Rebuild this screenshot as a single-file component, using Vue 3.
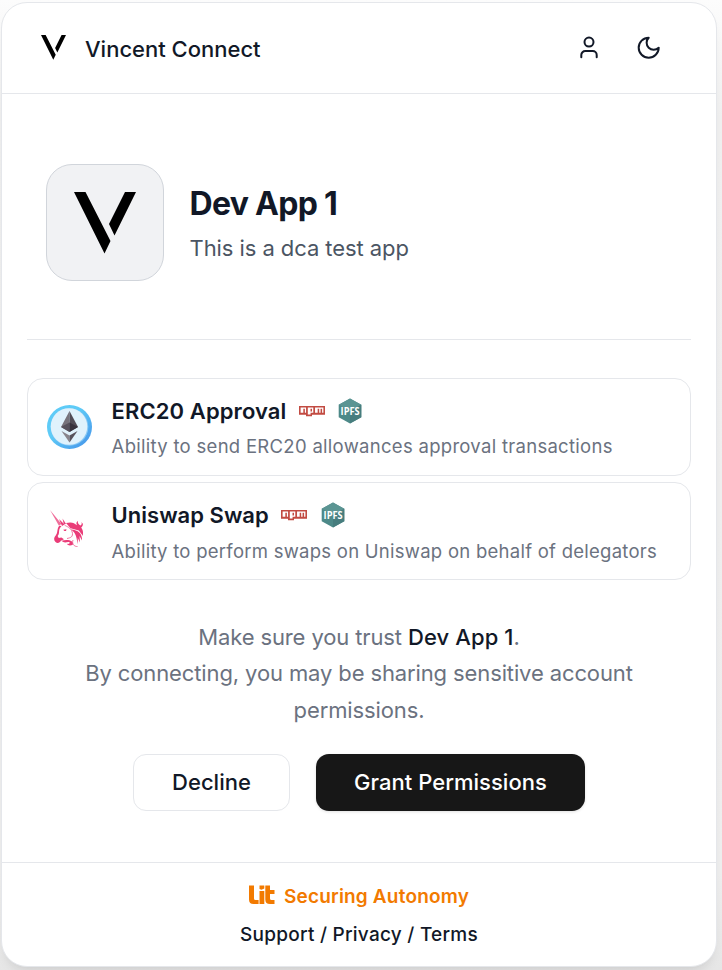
<script setup>
const abilities = [
  { id: 'erc20', name: 'ERC20 Approval', text: 'Ability to send ERC20 allowances approval transactions' },
  { id: 'uniswap', name: 'Uniswap Swap', text: 'Ability to perform swaps on Uniswap on behalf of delegators' },
]
</script>

<template>
  <div class="page">
    <main class="card">
      <header class="header">
        <svg class="brand-mark" viewBox="0 0 62 62"><path d="M0 0H11.5L36.5 49L30.5 61.5Z M51 0H62L40.5 43.5L35 32Z" /></svg>
        <span class="brand">Vincent Connect</span>
        <nav class="tools">
          <svg viewBox="0 0 26 26"><circle cx="13" cy="7.1" r="4.5" /><path d="M5.3 22.3V20A4 4 0 0 1 9.3 16H16.7A4 4 0 0 1 20.7 20V22.3" /></svg>
          <svg viewBox="0 0 26 26"><path d="M12.7 2.7A6.7 6.7 0 0 0 22.7 12.7A10 10 0 1 1 12.7 2.7Z" /></svg>
        </nav>
      </header>

      <section class="body">
        <div class="app">
          <div class="app-logo">
            <svg viewBox="0 0 62 62"><path d="M0 0H11.5L36.5 49L30.5 61.5Z M51 0H62L40.5 43.5L35 32Z" /></svg>
          </div>
          <div class="app-info">
            <h1>Dev App 1</h1>
            <p>This is a dca test app</p>
          </div>
        </div>

        <div class="abilities">
          <article v-for="a in abilities" :key="a.id" class="ability" :class="a.id">
            <svg v-if="a.id === 'erc20'" class="ability-icon" viewBox="0.5 0 46 46">
              <defs>
                <linearGradient id="ring" x1="0" y1="0" x2="1" y2="1"><stop offset=".4" stop-color="#5ecbf7" /><stop offset="1" stop-color="#438fe8" /></linearGradient>
              </defs>
              <ellipse cx="23" cy="23" rx="22.5" ry="22" fill="url(#ring)" />
              <circle cx="23" cy="23" r="18.8" fill="#8bcaf5" />
              <circle cx="22.5" cy="22.5" r="18.3" fill="#e0f2fc" />
              <path d="M23 7L14.5 23L23 28Z" fill="#77737b" />
              <path d="M23 7L31.5 23L23 28Z" fill="#514c56" />
              <path d="M14.5 23L23 18.5V28Z" fill="#57525c" />
              <path d="M31.5 23L23 18.5V28Z" fill="#38333e" />
              <path d="M15 27L23 31.5V38.5Z" fill="#88848b" />
              <path d="M31 27L23 31.5V38.5Z" fill="#57525c" />
            </svg>
            <svg v-else class="ability-icon" viewBox="1 2 46 46">
              <g fill="#ea3c78">
                <path d="M4 4L15.5 18L12.8 19.5Z" fill="#f06d9a" />
                <path d="M13 13L18.5 18.5L16 20Z" />
                <path d="M16.5 12.5L20 18L17.8 18.3Z" />
                <path d="M13.5 19.5C10.5 23 12.2 26.5 9.7 29.5C7.8 31.5 7.5 34 9.5 36C11.5 37.7 14 36.8 14.8 34.7L18 33.2L15.4 31.6L12.8 32L11.6 30C14.4 27 11.5 23.5 15.5 20.2Z" />
                <path d="M20 17C26 15.5 28 17 31 19.2C30 17.2 30.3 16.5 31.8 14.8C31.7 17 32.2 18.5 34.4 19.4C36 18.7 36.2 16.8 35 16.2C38 17 37 20 35.2 21.5C38 26 36.7 27.2 37 30L32.8 24.5L24.5 22.2Z" />
                <path d="M25 23.5C32 24 36.5 27.5 36 34.5L33.5 30L34 36.5L31.8 32L31.8 38.3C30.5 32 30.5 27.5 25 23.5Z" />
                <path d="M15.5 34.8C22 33 28 34.8 27 38.4C24.7 40.3 21.6 39.6 21 37.8C22.6 38.2 24 37.6 23.7 36.5C21.5 35 18.8 38.2 15.5 34.8Z" />
              </g>
              <path d="M18.5 19C21 21 24.5 21 26.2 26C27.5 31 24.4 31.8 21 32.5M27 34C25.7 38 28.2 40.7 31.5 40.5" fill="none" stroke="#ee6796" stroke-width=".9" />
              <path d="M17.2 23.8L20.5 23.3L20 25L18.4 24.9Z" fill="#ea3c78" />
            </svg>
            <div class="ability-info">
              <div class="ability-title">
                <h2>{{ a.name }}</h2>
                <svg class="npm" viewBox="0 0 780 300">
                  <path d="M0 0H780V260H390V310H210V260H0Z" fill="#c24b42" />
                  <path d="M48 206H130V86H176V206H212V46H48ZM264 46V256H347V206H429V46ZM390 166H345V86H390ZM481 46V206H560V86H606V206H647V86H693V206H732V46Z" fill="#fff" />
                </svg>
                <svg class="ipfs" viewBox="0 0 24 26">
                  <path d="M12 .4L23.3 6.8V19.2L12 25.6L.7 19.2V6.8Z" fill="#4d8988" />
                  <path d="M12 .4L23.3 6.8L12 13.2L.7 6.8Z" fill="#5b9593" />
                  <path d="M12 13.2L23.3 6.8V19.2L12 25.6Z" fill="#477d7e" />
                  <text x="2.6" y="17.1" textLength="19" lengthAdjust="spacingAndGlyphs">IPFS</text>
                </svg>
              </div>
              <p>{{ a.text }}</p>
            </div>
          </article>
        </div>

        <p class="notice">Make sure you trust <strong>Dev App 1</strong>.<br>By connecting, you may be sharing sensitive account<br>permissions.</p>

        <div class="actions">
          <button class="decline">Decline</button>
          <button class="grant">Grant Permissions</button>
        </div>
      </section>

      <footer class="footer">
        <div class="lit">
          <svg viewBox="0 0 26 20">
            <path d="M0 .5H5V13.5Q5 15 6.5 15H9.6V19H4.5Q0 19 0 14.5ZM10.5 6H15.3V19H10.5ZM10.5 .5H15.3V3.4L12.4 4.8L10.5 4ZM16.3 .5H21V5H25.5V9H21V13.5Q21 15 22.5 15H25.5V19H21Q16.3 19 16.3 14.5Z" />
          </svg>
          <span>Securing Autonomy</span>
        </div>
        <div class="links"><a>Support</a> / <a>Privacy</a> / <a>Terms</a></div>
      </footer>
    </main>
  </div>
</template>

<style>
body { background: #f4f4f4; overflow: hidden; }
</style>

<style scoped>
* { box-sizing: border-box; }
h1, h2, p { margin: 0; }
.page {
  height: 970px;
  padding: 2px 5px 3px 1px;
  overflow: hidden;
  background: linear-gradient(#fcfcfc, #f0f0f0 12%, #eee 90%, #e6e6e6);
  font-family: Inter, sans-serif;
  color: #111827;
}
.card {
  height: 965px;
  display: flex;
  flex-direction: column;
  background: #fff;
  border: 1px solid #e5e7eb;
  border-radius: 26px;
  box-shadow: 0 8px 12px -6px rgba(0, 0, 0, .13);
}
.header {
  height: 91px;
  flex: none;
  display: flex;
  align-items: center;
  padding: 0 54px 0 39px;
  border-bottom: 1px solid #e5e7eb;
}
.brand-mark { width: 25px; height: 25px; margin-top: -1px; }
.brand { margin: 2px 0 0 19px; font-size: 22px; font-weight: 500; }
.tools { display: flex; gap: 34px; margin-left: auto; }
.tools svg { width: 26px; height: 26px; fill: none; stroke: #111827; stroke-width: 2; stroke-linecap: round; stroke-linejoin: round; }
.body { flex: 1; padding: 0 25px; }
.app {
  height: 246px;
  display: flex;
  align-items: center;
  gap: 25.5px;
  padding: 12px 19px 0;
  border-bottom: 1px solid #e5e7eb;
}
.app-logo {
  width: 118px;
  height: 117px;
  display: flex;
  align-items: center;
  justify-content: center;
  background: #f1f2f4;
  border: 1px solid #d1d5db;
  border-radius: 26px;
}
.app-logo svg { width: 62px; height: 62px; overflow: visible; }
.app-info { padding-top: 3px; }
.app-info h1 { font-size: 32px; line-height: 40px; font-weight: 700; letter-spacing: -.7px; }
.app-info p { margin-top: 8px; font-size: 22px; line-height: 32px; color: #4b5563; letter-spacing: -.07px; }
.abilities { display: flex; flex-direction: column; gap: 6px; margin-top: 38px; }
.ability {
  height: 98px;
  display: flex;
  align-items: center;
  gap: 18.6px;
  padding: 0 18px 0 19px;
  border: 1px solid #e5e7eb;
  border-radius: 16px;
}
.ability-icon { width: 46px; height: 46px; }
.ability-info { white-space: nowrap; }
.ability-title { display: flex; align-items: center; height: 32px; }
.ability-title h2 { font-size: 22px; line-height: 28px; font-weight: 600; letter-spacing: .1px; }
.uniswap .ability-title h2 { letter-spacing: .02px; }
.npm { width: 26px; height: 10px; margin-left: 12.5px; overflow: visible; }
.ipfs { width: 24px; height: 26px; margin-left: 13.5px; }
.ipfs text { font: 700 10px "Open Sans", sans-serif; fill: #fff; }
.ability-info p { margin-top: 6px; font-size: 18.5px; line-height: 26px; color: #6b7280; letter-spacing: .29px; }
.uniswap .ability-info { padding-top: 1px; }
.uniswap .ability-info p { margin-top: 7px; letter-spacing: .26px; }
.uniswap .ability-title { height: 31px; }
.notice { margin-top: 38.8px; text-align: center; font-size: 22px; line-height: 36.4px; color: #6b7280; letter-spacing: -.12px; }
.notice strong { color: #111827; font-weight: 500; letter-spacing: .1px; }
.actions { display: flex; justify-content: center; gap: 26px; margin-top: 25.5px; }
button { height: 57px; padding: 0; border-radius: 13px; font: 500 22px Inter, sans-serif; letter-spacing: .03px; }
.decline { width: 157px; color: #111827; background: #fff; border: 1px solid #e5e7eb; }
.grant { width: 269px; color: #fff; background: #171717; border: 0; box-shadow: 0 1px 3px rgba(0, 0, 0, .12); }
.footer {
  height: 104px;
  flex: none;
  display: flex;
  flex-direction: column;
  align-items: center;
  padding-top: 19px;
  border-top: 1px solid #e5e7eb;
  font-size: 19px;
  font-weight: 500;
}
.lit { display: flex; align-items: center; gap: 9px; height: 28px; color: #f27a00; font-weight: 600; letter-spacing: .18px; }
.lit svg { width: 26px; height: 20px; margin-top: -3px; fill: currentColor; }
.links { margin-top: 11px; line-height: 28px; letter-spacing: .25px; }
</style>
